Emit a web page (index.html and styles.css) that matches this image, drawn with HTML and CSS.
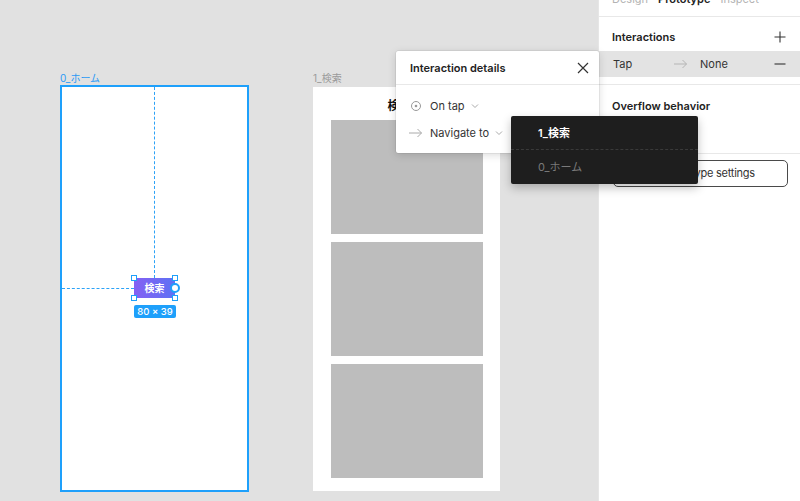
FILE: index.html
```html
<!DOCTYPE html>
<html>
<head>
<meta charset="utf-8">
<link rel="stylesheet" href="styles.css">
</head>
<body>
<div class="app">
  <div class="canvas">
    <div class="frame-label label-home">0_ホーム</div>
    <div class="frame frame-home">
      <div class="guide-v"></div>
      <div class="guide-h"></div>
      <div class="btn">検索</div>
      <span class="handle h-tl"></span>
      <span class="handle h-tr"></span>
      <span class="handle h-bl"></span>
      <span class="handle h-br"></span>
      <span class="knob"></span>
      <div class="size-badge">80 × 39</div>
    </div>

    <div class="frame-label label-search">1_検索</div>
    <div class="frame frame-search">
      <div class="search-title">検索</div>
      <div class="ph"></div>
      <div class="ph"></div>
      <div class="ph"></div>
    </div>

    <div class="popup">
      <div class="popup-head">
        <span class="popup-title">Interaction details</span>
        <svg class="close" width="12" height="12" viewBox="0 0 12 12"><path d="M1 1L11 11M11 1L1 11" stroke="#333" stroke-width="1.2" fill="none"/></svg>
      </div>
      <div class="popup-body">
        <div class="prow">
          <svg class="picon" width="12" height="12" viewBox="0 0 12 12"><circle cx="6" cy="6" r="4.5" stroke="#999" fill="none"/><circle cx="6" cy="6" r="1.3" fill="#999"/></svg>
          <span class="ptext">On tap</span>
          <svg class="chev" width="8" height="6" viewBox="0 0 8 6"><path d="M1 1.5L4 4.5L7 1.5" stroke="#aaa" fill="none"/></svg>
        </div>
        <div class="prow">
          <svg class="picon arrow" width="14" height="10" viewBox="0 0 14 10"><path d="M0 5H12.5M8.5 1L12.5 5L8.5 9" stroke="#aaa" fill="none"/></svg>
          <span class="ptext">Navigate to</span>
          <svg class="chev" width="8" height="6" viewBox="0 0 8 6"><path d="M1 1.5L4 4.5L7 1.5" stroke="#aaa" fill="none"/></svg>
        </div>
      </div>
    </div>

    <div class="dropdown">
      <div class="ditem active">1_検索</div>
      <div class="ditem muted">0_ホーム</div>
    </div>
  </div>

  <aside class="panel">
    <div class="tabs">
      <span class="tab">Design</span>
      <span class="tab tab-on">Prototype</span>
      <span class="tab">Inspect</span>
    </div>
    <div class="section-head">
      <span class="section-title">Interactions</span>
      <svg width="12" height="12" viewBox="0 0 12 12"><path d="M6 0.5V11.5M0.5 6H11.5" stroke="#333" stroke-width="1.1"/></svg>
    </div>
    <div class="tap-row">
      <span class="tap-trigger">Tap</span>
      <svg class="tap-arrow" width="14" height="10" viewBox="0 0 14 10"><path d="M0 5H12.5M8.5 1L12.5 5L8.5 9" stroke="#b5b5b5" fill="none"/></svg>
      <span class="tap-dest">None</span>
      <svg class="minus" width="12" height="12" viewBox="0 0 12 12"><path d="M0.5 6H11.5" stroke="#333" stroke-width="1.1"/></svg>
    </div>
    <div class="divider"></div>
    <div class="overflow">
      <span class="section-title">Overflow behavior</span>
    </div>
    <div class="divider divider-2"></div>
    <div class="settings-wrap">
      <div class="settings-btn">Show prototype settings</div>
    </div>
  </aside>
</div>
</body>
</html>
```

FILE: styles.css
```css
* { box-sizing: border-box; }
html, body { margin: 0; padding: 0; }
body {
  width: 800px;
  height: 501px;
  overflow: hidden;
  font-family: Inter, "Noto Sans CJK JP", sans-serif;
  background: #e1e1e1;
  color: #333;
}
.app {
  display: flex;
  width: 800px;
  height: 501px;
}
.canvas {
  position: relative;
  flex: 0 0 598px;
  height: 501px;
  background: #e1e1e1;
}
.frame-label {
  position: absolute;
  font-size: 10px;
  line-height: 12px;
}
.label-home { left: 60px; top: 72px; color: #2b9af5; }
.label-search { left: 313px; top: 72px; color: #9a9a9a; }

.frame {
  position: absolute;
  background: #fff;
}
.frame-home {
  left: 60px;
  top: 85px;
  width: 189px;
  height: 407px;
  border: 2px solid #1ea0fb;
}
.guide-v {
  position: absolute;
  left: 92px;
  top: 0;
  height: 191px;
  border-left: 1px dashed #2ca2f7;
}
.guide-h {
  position: absolute;
  left: 0;
  top: 201px;
  width: 72px;
  border-top: 1px dashed #2ca2f7;
}
.btn {
  position: absolute;
  left: 72px;
  top: 191px;
  width: 41px;
  height: 20px;
  background: linear-gradient(90deg, #8560f3, #5d72f4);
  color: #fff;
  font-size: 10px;
  font-weight: 700;
  line-height: 20px;
  text-align: center;
}
.handle {
  position: absolute;
  width: 6px;
  height: 6px;
  background: #fff;
  border: 1px solid #1ea0fb;
}
.h-tl { left: 69px; top: 188px; }
.h-tr { left: 110px; top: 188px; }
.h-bl { left: 69px; top: 208px; }
.h-br { left: 110px; top: 208px; }
.knob {
  position: absolute;
  left: 108px;
  top: 196px;
  width: 10px;
  height: 10px;
  border-radius: 50%;
  background: #fff;
  border: 2px solid #1ea0fb;
}
.size-badge {
  position: absolute;
  left: 72px;
  top: 218px;
  width: 42px;
  height: 13px;
  border-radius: 2px;
  background: #1ea0fb;
  color: #fff;
  font-size: 9.5px;
  font-weight: 500;
  line-height: 13px;
  text-align: center;
}

.frame-search {
  left: 313px;
  top: 87px;
  width: 187px;
  height: 404px;
  display: flex;
  flex-direction: column;
  align-items: center;
  padding-top: 12px;
  gap: 8px;
}
.search-title {
  font-size: 12px;
  font-weight: 700;
  color: #111;
  line-height: 14px;
  margin-bottom: -1px;
  margin-left: -14px;
}
.ph {
  width: 152px;
  height: 114px;
  background: #bdbdbd;
  flex: 0 0 auto;
}

.popup {
  position: absolute;
  left: 396px;
  top: 51px;
  width: 203px;
  height: 102px;
  background: #fff;
  border-radius: 2px;
  box-shadow: 0 2px 8px rgba(0,0,0,0.15), 0 0 0 0.5px rgba(0,0,0,0.1);
}
.popup-head {
  height: 34px;
  display: flex;
  align-items: center;
  justify-content: space-between;
  padding: 0 10px 0 14px;
  border-bottom: 1px solid #e8e8e8;
}
.popup-title {
  font-size: 11px;
  font-weight: 600;
  color: #222;
}
.popup-body {
  padding-top: 7px;
}
.prow {
  height: 27px;
  display: flex;
  align-items: center;
  padding-left: 14px;
}
.picon { flex: 0 0 auto; margin-right: 8px; }
.picon.arrow { margin-left: -1px; margin-right: 7px; }
.ptext { font-size: 11px; color: #333; margin-right: 6px; }
.chev { flex: 0 0 auto; }

.dropdown {
  position: absolute;
  left: 511px;
  top: 116px;
  width: 187px;
  height: 68px;
  background: #1e1e1e;
  border-radius: 2px;
  box-shadow: 0 4px 10px rgba(0,0,0,0.25);
}
.ditem {
  height: 34px;
  padding-left: 27px;
  font-size: 11px;
  line-height: 34px;
}
.ditem.active {
  color: #fff;
  font-weight: 600;
  border-bottom: 1px dashed #3a3a3a;
}
.ditem.muted { color: #7a7a7a; }

.panel {
  flex: 0 0 202px;
  height: 501px;
  background: #fff;
  border-left: 1px solid #e6e6e6;
  display: flex;
  flex-direction: column;
}
.tabs {
  height: 17px;
  border-bottom: 1px solid #e8e8e8;
  display: flex;
  gap: 10px;
  padding-left: 13px;
  overflow: hidden;
}
.tab {
  font-size: 11px;
  line-height: 14px;
  margin-top: -8px;
  color: #b3b3b3;
}
.tab-on { color: #222; font-weight: 600; }
.section-head {
  height: 34px;
  display: flex;
  align-items: center;
  justify-content: space-between;
  padding: 6px 14px 0 13px;
}
.section-title {
  font-size: 11px;
  font-weight: 600;
  color: #222;
}
.tap-row {
  height: 26px;
  background: #e3e3e3;
  display: flex;
  align-items: center;
  padding: 0 14px 0 14px;
  font-size: 11px;
  color: #333;
}
.tap-trigger { width: 61px; }
.tap-arrow { margin-right: 12px; }
.tap-dest { flex: 1; }
.divider {
  height: 1px;
  background: #e8e8e8;
  margin-top: 7px;
}
.overflow {
  height: 40px;
  display: flex;
  align-items: center;
  padding-left: 13px;
  padding-top: 2px;
}
.divider-2 { margin-top: 28px; }
.settings-wrap {
  padding: 6px 12px 0 14px;
}
.settings-btn {
  height: 27px;
  border: 1px solid #4a4a4a;
  border-radius: 5px;
  font-size: 11px;
  letter-spacing: -0.25px;
  line-height: 25px;
  text-align: center;
  padding-right: 12px;
  color: #333;
}
```
